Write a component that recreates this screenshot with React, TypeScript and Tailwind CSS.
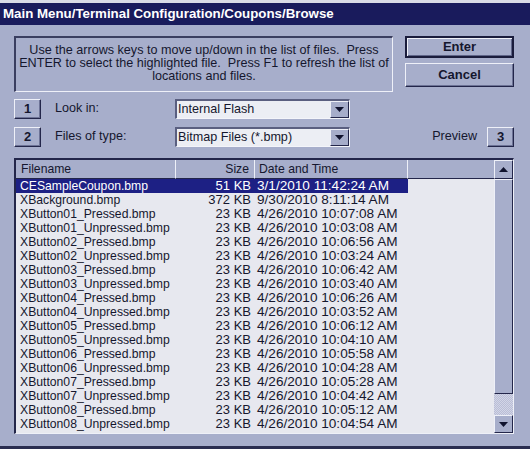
import React from "react";

const files: [string, string, string][] = [
    ["CESampleCoupon.bmp", "51 KB", "3/1/2010 11:42:24 AM"],
    ["XBackground.bmp", "372 KB", "9/30/2010 8:11:14 AM"],
    ["XButton01_Pressed.bmp", "23 KB", "4/26/2010 10:07:08 AM"],
    ["XButton01_Unpressed.bmp", "23 KB", "4/26/2010 10:03:08 AM"],
    ["XButton02_Pressed.bmp", "23 KB", "4/26/2010 10:06:56 AM"],
    ["XButton02_Unpressed.bmp", "23 KB", "4/26/2010 10:03:24 AM"],
    ["XButton03_Pressed.bmp", "23 KB", "4/26/2010 10:06:42 AM"],
    ["XButton03_Unpressed.bmp", "23 KB", "4/26/2010 10:03:40 AM"],
    ["XButton04_Pressed.bmp", "23 KB", "4/26/2010 10:06:26 AM"],
    ["XButton04_Unpressed.bmp", "23 KB", "4/26/2010 10:03:52 AM"],
    ["XButton05_Pressed.bmp", "23 KB", "4/26/2010 10:06:12 AM"],
    ["XButton05_Unpressed.bmp", "23 KB", "4/26/2010 10:04:10 AM"],
    ["XButton06_Pressed.bmp", "23 KB", "4/26/2010 10:05:58 AM"],
    ["XButton06_Unpressed.bmp", "23 KB", "4/26/2010 10:04:28 AM"],
    ["XButton07_Pressed.bmp", "23 KB", "4/26/2010 10:05:28 AM"],
    ["XButton07_Unpressed.bmp", "23 KB", "4/26/2010 10:04:42 AM"],
    ["XButton08_Pressed.bmp", "23 KB", "4/26/2010 10:05:12 AM"],
    ["XButton08_Unpressed.bmp", "23 KB", "4/26/2010 10:04:54 AM"],
];

function Arrow({ down }: { down?: boolean }) {
    return (
        <svg width="9" height="5" viewBox="0 0 9 5">
            <polygon points={down ? "0,0 9,0 4.5,5" : "0,5 9,5 4.5,0"} fill="#10132e" />
        </svg>
    );
}

function NumKey({ label }: { label: string }) {
    return (
        <div className="w-[27px] h-[20px] flex items-center justify-center border border-t-[#eef0f8] border-l-[#eef0f8] border-b-[#23264a] border-r-[#23264a] shadow-[inset_-1px_-1px_0_#6d7396] text-[13px] font-bold text-[#15172e]">
            {label}
        </div>
    );
}

function Combo({ value }: { value: string }) {
    return (
        <div className="w-[175px] h-[20px] flex bg-[#eceef4] border-t-2 border-l-2 border-t-[#5a5f80] border-l-[#5a5f80] border-b border-r border-b-[#f4f5fa] border-r-[#f4f5fa]">
            <div className="flex-1 pl-[1px] leading-[17px]">{value}</div>
            <div className="w-[19px] h-full flex items-center justify-center bg-[#a6adca] border border-t-[#eef0f8] border-l-[#eef0f8] border-b-[#23264a] border-r-[#23264a]">
                <Arrow down />
            </div>
        </div>
    );
}

export default function App() {
    return (
        <div
            className="w-[530px] h-[449px] bg-[#a7aecb] flex flex-col text-[12.6px] text-[#15172e] overflow-hidden"
            style={{ fontFamily: "Tahoma, 'Liberation Sans', Arial, sans-serif" }}
        >
            <div className="h-[3px] bg-[#d9dbe6]" />
            <div className="h-[22px] bg-[#191b5c] text-white font-bold text-[13.3px] leading-[22px] pl-[3px]">
                Main Menu/Terminal Configuration/Coupons/Browse
            </div>

            <div className="flex flex-col pl-[14px] pr-[16px] flex-1">
                <div className="flex gap-[12px] mt-[11px]">
                    <div className="w-[379px] h-[56px] border-t-2 border-l-2 border-t-[#3a3e60] border-l-[#3a3e60] border-b border-r border-b-[#eef0f8] border-r-[#eef0f8] text-center leading-[13px] pt-[6px] whitespace-nowrap">
                        Use the arrows keys to move up/down in the list of files.&nbsp; Press
                        <br />
                        ENTER to select the highlighted file.&nbsp; Press F1 to refresh the list of
                        <br />
                        locations and files.
                    </div>
                    <div className="w-[109px] flex flex-col gap-[5px]">
                        <div className="h-[22px] flex items-center justify-center font-bold text-[13px] border-2 border-[#1a1c3c] shadow-[inset_1px_1px_0_#eef0f8,inset_-1px_-1px_0_#5f6588]">
                            Enter
                        </div>
                        <div className="h-[24px] flex items-center justify-center font-bold text-[13px] border border-t-[#eef0f8] border-l-[#eef0f8] border-b-[#23264a] border-r-[#23264a] shadow-[inset_-1px_-1px_0_#6d7396]">
                            Cancel
                        </div>
                    </div>
                </div>

                <div className="flex items-center mt-[6px] h-[21px]">
                    <NumKey label="1" />
                    <div className="w-[134px] pl-[14px]">Look in:</div>
                    <Combo value="Internal Flash" />
                </div>
                <div className="flex items-center mt-[7px] h-[21px]">
                    <NumKey label="2" />
                    <div className="w-[134px] pl-[14px]">Files of type:</div>
                    <Combo value="Bitmap Files (*.bmp)" />
                    <div className="ml-auto mr-[10px]">Preview</div>
                    <NumKey label="3" />
                </div>

                <div className="mt-[11px] h-[276px] flex border-t-2 border-l-2 border-t-[#23264a] border-l-[#23264a] border-b border-r border-b-[#eef0f8] border-r-[#eef0f8]">
                    <div className="flex-1 flex flex-col bg-[#e7e8ef]">
                        <div className="h-[19px] flex bg-[#a7aecb] leading-[18px] text-[12.2px]">
                            <div className="w-[160px] pl-[5px] border-r border-[#eef0f8] border-b border-b-[#23264a]">Filename</div>
                            <div className="w-[79px] text-right pr-[5px] border-r border-[#eef0f8] border-b border-b-[#23264a]">Size</div>
                            <div className="w-[153px] pl-[4px] border-r border-[#eef0f8] border-b border-b-[#23264a]">Date and Time</div>
                            <div className="flex-1 border-b border-b-[#23264a]" />
                        </div>
                        {files.map(([name, size, date], i) => (
                            <div key={i} className="h-[14px] flex leading-[14px] whitespace-nowrap">
                                <div className={`w-[392px] flex ${i === 0 ? "bg-[#1d2084] text-white" : ""}`}>
                                    <div className="w-[160px] pl-[4px] text-[12.2px]">{name}</div>
                                    <div className="w-[79px] text-right pr-[4px] text-[13px]">{size}</div>
                                    <div className="w-[153px] pl-[2px] text-[13.6px]">{date}</div>
                                </div>
                            </div>
                        ))}
                    </div>
                    <div className="w-[19px] flex flex-col bg-[#c4c8dc] bg-[repeating-conic-gradient(#b9bdd6_0_25%,#d2d5e6_0_50%)] bg-[length:2px_2px]">
                        <div className="h-[19px] flex items-center justify-center bg-[#a7aecb] border border-t-[#eef0f8] border-l-[#eef0f8] border-b-[#23264a] border-r-[#23264a]">
                            <Arrow />
                        </div>
                        <div className="h-[215px] bg-[#a7aecb] border border-t-[#eef0f8] border-l-[#eef0f8] border-b-[#23264a] border-r-[#23264a]" />
                        <div className="flex-1" />
                        <div className="h-[18px] flex items-center justify-center bg-[#a7aecb] border border-t-[#eef0f8] border-l-[#eef0f8] border-b-[#23264a] border-r-[#23264a]">
                            <Arrow down />
                        </div>
                    </div>
                </div>
            </div>
            <div className="h-[3px] bg-[#2a2d50]" />
        </div>
    );
}
